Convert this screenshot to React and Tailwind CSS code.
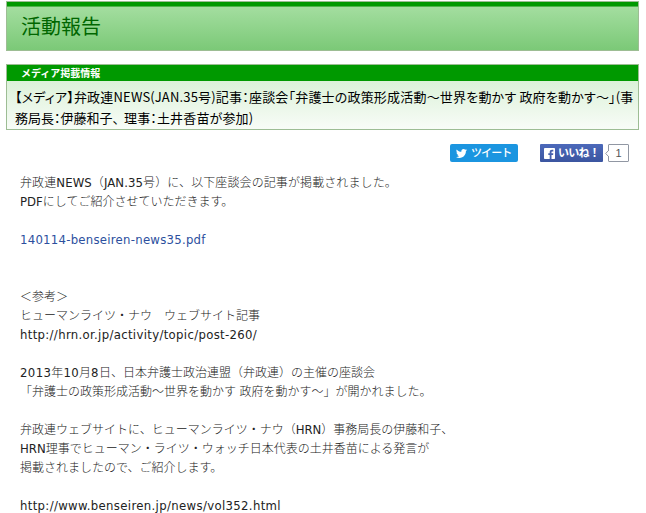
// App.jsx - activity report article page (media coverage entry)

const TwitterBird = () => (
  <svg viewBox="0 0 24 24" className="h-[11px] w-[11px]" fill="#fff">
    <path d="M23.95 4.57a10 10 0 0 1-2.82.77 4.96 4.96 0 0 0 2.16-2.72c-.95.55-2 .95-3.13 1.18a4.92 4.92 0 0 0-8.38 4.48C7.69 8.09 4.07 6.13 1.64 3.16a4.9 4.9 0 0 0 1.52 6.57 4.9 4.9 0 0 1-2.23-.61v.06a4.92 4.92 0 0 0 3.95 4.83 5 5 0 0 1-2.21.08 4.94 4.94 0 0 0 4.6 3.42A9.87 9.87 0 0 1 0 19.54a13.99 13.99 0 0 0 7.56 2.21c9.05 0 14-7.5 14-13.98 0-.21 0-.42-.02-.63a9.94 9.94 0 0 0 2.41-2.57z" />
  </svg>
);

const FacebookMark = () => (
  <svg viewBox="0 0 11 11" className="h-[11px] w-[11px]">
    <rect width="11" height="11" rx="0.8" fill="#fff" />
    <path d="M5.7 11V6.9H4.3V5.3h1.4V4.1c0-1.5.9-2.3 2.3-2.3h1.3v1.6h-.9c-.7 0-.9.3-.9.9v1h1.8l-.2 1.6H7.5V11z" fill="#4560ad" />
  </svg>
);

const SocialButtons = () => (
  <div className="mt-[14px] mr-[17px] flex h-[18px] items-center justify-end">
    <a className="flex h-[18px] w-[68px] items-center gap-[4px] rounded-[2px] bg-[#1b95e0] pl-[6px] text-[11px] whitespace-nowrap text-white">
      <TwitterBird />
      <span className="pt-px leading-[16px] font-medium tracking-[-0.9px]">ツイート</span>
    </a>
    <a className="ml-[22px] flex h-[18px] w-[63px] items-center gap-[3px] rounded-[1px] bg-linear-to-b from-[#4c69ba] to-[#3b55a0] pl-[4px] text-[11px] font-bold whitespace-nowrap text-white">
      <FacebookMark />
      <span className="pt-px leading-[16px] tracking-[-0.7px]">いいね！</span>
    </a>
    <div className="relative ml-[5px] h-[18px] w-[21px] rounded-[1px] border border-[#9197a3] text-center font-['Liberation_Sans',sans-serif] text-[11px] leading-[16px] text-[#555]">
      <svg viewBox="0 0 4 7" className="absolute top-[5px] left-[-4px] h-[7px] w-[4px]">
        <path d="M4 0L.7 3.5 4 7" fill="#fff" stroke="#9197a3" />
      </svg>
      1
    </div>
  </div>
);

// Latin text and digits inside the Japanese copy
const Latin = ({ children }) => (
  <span className="text-[13px] leading-none font-normal">{children}</span>
);

const ArticleBody = () => (
  <div className="mt-[12px] ml-[14px] font-['DejaVu_Sans_Condensed','Noto_Sans_CJK_JP',sans-serif] text-[12px] leading-[19px] font-light whitespace-pre text-[#222] *:h-[19px]">
    <p className="tracking-[0.1px]">弁政連<Latin>NEWS</Latin>（<Latin>JAN.35</Latin>号）に、以下座談会の記事が掲載されました。</p>
    <p><Latin>PDF</Latin>にしてご紹介させていただきます。</p>
    <p className="mt-[19px] tracking-[0.26px] text-[#2c4f9e]">
      <a><Latin>140114-benseiren-news35.pdf</Latin></a>
    </p>
    <p className="mt-[38px]">＜参考＞</p>
    <p>ヒューマンライツ・ナウ　ウェブサイト記事</p>
    <p className="tracking-[0.33px]"><Latin>http://hrn.or.jp/activity/topic/post-260/</Latin></p>
    <p className="mt-[19px]"><span className="tracking-[0.4px]"><Latin>2013</Latin></span>年<span className="tracking-[0.4px]"><Latin>10</Latin></span>月<span className="tracking-[0.4px]"><Latin>8</Latin></span>日、日本弁護士政治連盟（弁政連）の主催の座談会</p>
    <p>「弁護士の政策形成活動～世界を動かす 政府を動かす～」が開かれました。</p>
    <p className="mt-[19px]">弁政連ウェブサイトに、ヒューマンライツ・ナウ（<Latin>HRN</Latin>）事務局長の伊藤和子、</p>
    <p><Latin>HRN</Latin>理事でヒューマン・ライツ・ウォッチ日本代表の土井香苗による発言が</p>
    <p>掲載されましたので、ご紹介します。</p>
    <p className="mt-[19px] tracking-[0.34px]"><Latin>http://www.benseiren.jp/news/vol352.html</Latin></p>
  </div>
);

export default function App() {
  return (
    <div className="h-[513px] w-[646px] overflow-hidden bg-white pt-px pl-[6px] font-['DejaVu_Sans','Noto_Sans_CJK_JP',sans-serif]">
      {/* Page title */}
      <div className="h-[50px] w-[633px] border border-[#9dbd94] bg-linear-to-b from-[#a8e0a4] to-[#7bc977]">
        <div className="h-[5px] border-b border-[#4eb34b] bg-[#009900]" />
        <h1 className="pt-px pl-[14px] text-[20px] leading-[38px] text-[#006600]">活動報告</h1>
      </div>

      {/* Entry heading */}
      <div className="mt-[13px] h-[66px] w-[633px] border border-[#9dbd94] bg-linear-to-b from-[#d2eecf] to-[#f8fcf7]">
        <div className="h-[16px] bg-[#009900] pl-[14px] text-[10px] leading-[17px] font-bold text-white">メディア掲載情報</div>
        <h2 className="pt-[5px] pl-[8px] font-['Noto_Sans_CJK_JP',sans-serif] text-[13px] leading-[21px] font-normal whitespace-nowrap text-black [font-feature-settings:'palt']">
          <span className="block tracking-[0.19px]">【メディア】弁政連NEWS(JAN.35号)記事：座談会「弁護士の政策形成活動～世界を動かす 政府を動かす～」(事</span>
          <span className="block">務局長：伊藤和子、<span className="ml-[5px] tracking-[0.15px]">理事：土井香苗が参加)</span></span>
        </h2>
      </div>

      <SocialButtons />
      <ArticleBody />
    </div>
  );
}
